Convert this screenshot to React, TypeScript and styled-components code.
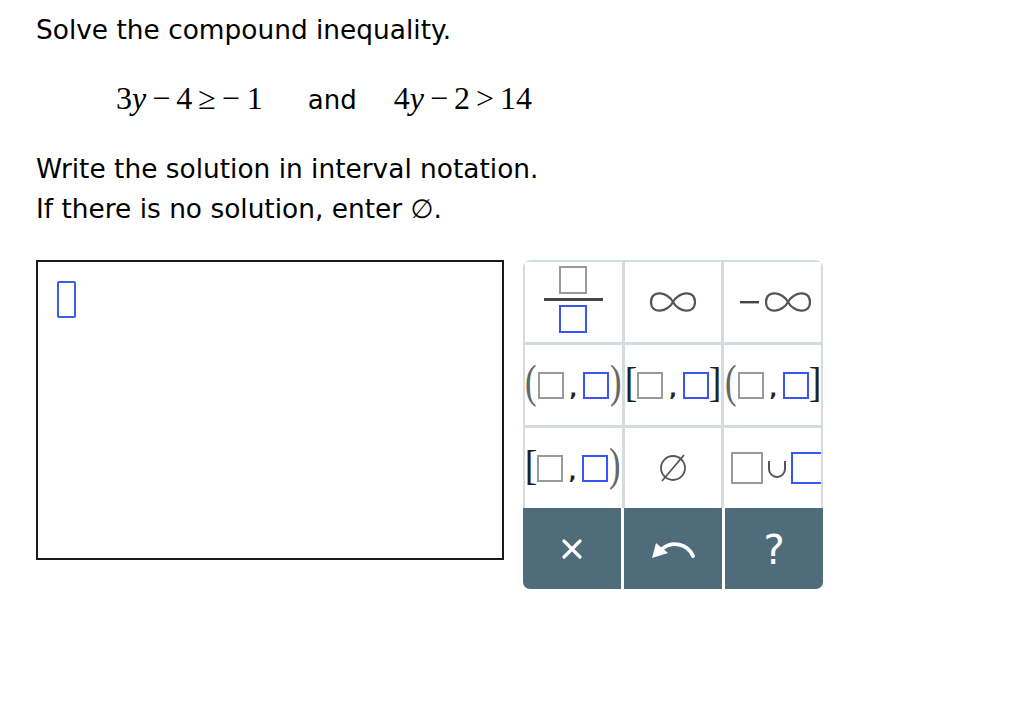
import React from 'react';
import styled, { createGlobalStyle } from 'styled-components';

const GlobalStyle = createGlobalStyle`
  html, body {
    margin: 0;
    padding: 0;
    background: #fff;
  }
  body {
    font-family: "DejaVu Sans", Verdana, sans-serif;
    color: #000;
  }
`;

const Page = styled.div`
  padding: 13px 0 0 36px;
`;

const Prompt = styled.div`
  font-size: 26.4px;
  line-height: 34px;
`;

const MathLine = styled.div`
  display: flex;
  align-items: baseline;
  margin: 33px 0 0 80px;
  height: 40px;
`;

const Expr = styled.span`
  font-family: "Liberation Serif", "Times New Roman", serif;
  font-size: 32px;
  display: flex;
  align-items: baseline;
`;

const Var = styled.i`
  font-style: italic;
`;

const Op = styled.span<{ $unary?: boolean }>`
  margin: ${p => (p.$unary ? '0 7px 0 0' : '0 6px')};
`;

const Conj = styled.span`
  font-size: 26px;
  margin: 0 37px 0 45px;
`;

const Instructions = styled.div`
  margin-top: 29px;
  font-size: 26.4px;
  line-height: 40px;
`;

const Workspace = styled.div`
  display: flex;
  align-items: flex-start;
  gap: 19px;
  margin-top: 31px;
`;

const AnswerBox = styled.div`
  box-sizing: border-box;
  width: 468px;
  height: 300px;
  border: 2px solid #1a1a1a;
  padding: 19px 0 0 19px;
`;

const Cursor = styled.div`
  box-sizing: border-box;
  width: 19px;
  height: 37px;
  border: 2px solid #3c5cf0;
  border-radius: 2px;
`;

const Keypad = styled.div`
  width: 300px;
  border-radius: 7px;
  overflow: hidden;
`;

const KeyGrid = styled.div`
  display: grid;
  grid-template-columns: repeat(3, 1fr);
  grid-auto-rows: 80px;
  gap: 3px;
  background: #d4dcdf;
  border: 2px solid #d4dcdf;
  border-bottom: none;
  border-radius: 7px 7px 0 0;
`;

const Key = styled.div`
  background: #fff;
  display: flex;
  align-items: center;
  justify-content: center;
  overflow: hidden;
`;

const ActionRow = styled.div`
  display: grid;
  grid-template-columns: repeat(3, 1fr);
  gap: 3px;
  background: #fff;
  height: 81px;
`;

const ActionKey = styled.div`
  background: #4e6c79;
  display: flex;
  align-items: center;
  justify-content: center;
  color: #fff;
`;

const Slot = styled.span<{ $blue?: boolean; $w?: number; $h?: number }>`
  box-sizing: border-box;
  display: inline-block;
  flex-shrink: 0;
  width: ${p => p.$w ?? 26}px;
  height: ${p => p.$h ?? 27}px;
  border: 2px solid ${p => (p.$blue ? '#3a55f5' : '#9a9a9a')};
`;

const Fraction = styled.div`
  display: flex;
  flex-direction: column;
  align-items: center;
  gap: 4px;
  margin-top: -6px;
`;

const FracBar = styled.div`
  width: 59px;
  height: 3px;
  background: #444;
`;

const Interval = styled.div`
  display: flex;
  align-items: center;
  font-family: "Liberation Serif", "Times New Roman", serif;
  color: #555;
`;

const Bracket = styled.span<{ $square?: boolean }>`
  font-size: ${p => (p.$square ? 42 : 46)}px;
  line-height: 1;
  transform: scaleX(${p => (p.$square ? 0.9 : 0.75)});
  margin: -6px -1px 0;
  color: ${p => (p.$square ? '#222' : '#666')};
`;

const Comma = styled.span`
  font-family: "DejaVu Sans", sans-serif;
  font-size: 20px;
  font-weight: bold;
  color: #222;
  margin: 8px 6px 0 6px;
`;

const UnionKey = styled.div`
  display: flex;
  align-items: center;
  gap: 3px;
  margin-left: 8px;
`;

const Help = styled.span`
  font-family: "DejaVu Sans", sans-serif;
  font-size: 40px;
  line-height: 1;
  margin-top: 2px;
`;

const Infinity = ({ w = 48 }: { w?: number }) => (
  <svg width={w} height={28} viewBox="0 0 48 28">
    <path
      d="M24 14 C19 4 2 1 2 14 C2 27 19 24 24 14 C29 4 46 1 46 14 C46 27 29 24 24 14 Z"
      fill="none"
      stroke="#555"
      strokeWidth={2.2}
    />
  </svg>
);

const MinusInfinity = () => (
  <div style={{ display: 'flex', alignItems: 'center', gap: 1, marginLeft: 10 }}>
    <svg width={19} height={4} viewBox="0 0 19 4">
      <rect x={0} y={1} width={19} height={2.4} fill="#444" />
    </svg>
    <Infinity w={56} />
  </div>
);

const EmptySet = () => (
  <svg width={32} height={32} viewBox="0 0 32 32">
    <circle cx={16} cy={16} r={12} fill="none" stroke="#555" strokeWidth={1.8} />
    <line x1={5} y1={29} x2={27} y2={3} stroke="#555" strokeWidth={1.8} />
  </svg>
);

const UnionSign = () => (
  <svg width={22} height={24} viewBox="0 0 22 24">
    <path d="M3 5 V13 A8 8 0 0 0 19 13 V5" fill="none" stroke="#555" strokeWidth={2} />
  </svg>
);

const ClearIcon = () => (
  <svg width={22} height={22} viewBox="0 0 22 22">
    <path d="M3 3 L19 19 M19 3 L3 19" stroke="#fff" strokeWidth={3.2} strokeLinecap="round" />
  </svg>
);

const UndoIcon = () => (
  <svg width={46} height={22} viewBox="0 0 46 22">
    <path d="M43 18 C37 5 22 3 12 11" fill="none" stroke="#fff" strokeWidth={3.8} strokeLinecap="round" />
    <polygon points="2,20 6,5 18,15" fill="#fff" />
  </svg>
);

const IntervalKey = ({ open, close }: { open: string; close: string }) => (
  <Interval>
    <Bracket $square={open === '['}>{open}</Bracket>
    <Slot $w={26} $h={27} />
    <Comma>,</Comma>
    <Slot $blue $w={26} $h={27} />
    <Bracket $square={close === ']'}>{close}</Bracket>
  </Interval>
);

export default function App() {
  return (
    <Page>
      <GlobalStyle />
      <Prompt>Solve the compound inequality.</Prompt>
      <MathLine>
        <Expr>
          3<Var>y</Var>
          <Op>−</Op>4<Op>≥</Op>
          <Op $unary>−</Op>1
        </Expr>
        <Conj>and</Conj>
        <Expr>
          4<Var>y</Var>
          <Op>−</Op>2<Op>&gt;</Op>14
        </Expr>
      </MathLine>
      <Instructions>
        Write the solution in interval notation.
        <br />
        If there is no solution, enter ∅.
      </Instructions>
      <Workspace>
        <AnswerBox>
          <Cursor />
        </AnswerBox>
        <Keypad>
          <KeyGrid>
            <Key>
              <Fraction>
                <Slot $w={28} $h={28} />
                <FracBar />
                <Slot $blue $w={28} $h={28} />
              </Fraction>
            </Key>
            <Key>
              <Infinity />
            </Key>
            <Key>
              <MinusInfinity />
            </Key>
            <Key>
              <IntervalKey open="(" close=")" />
            </Key>
            <Key>
              <IntervalKey open="[" close="]" />
            </Key>
            <Key>
              <IntervalKey open="(" close="]" />
            </Key>
            <Key>
              <IntervalKey open="[" close=")" />
            </Key>
            <Key>
              <EmptySet />
            </Key>
            <Key>
              <UnionKey>
                <Slot $w={32} $h={32} />
                <UnionSign />
                <Slot $blue $w={32} $h={32} />
              </UnionKey>
            </Key>
          </KeyGrid>
          <ActionRow>
            <ActionKey>
              <ClearIcon />
            </ActionKey>
            <ActionKey>
              <UndoIcon />
            </ActionKey>
            <ActionKey>
              <Help>?</Help>
            </ActionKey>
          </ActionRow>
        </Keypad>
      </Workspace>
    </Page>
  );
}
